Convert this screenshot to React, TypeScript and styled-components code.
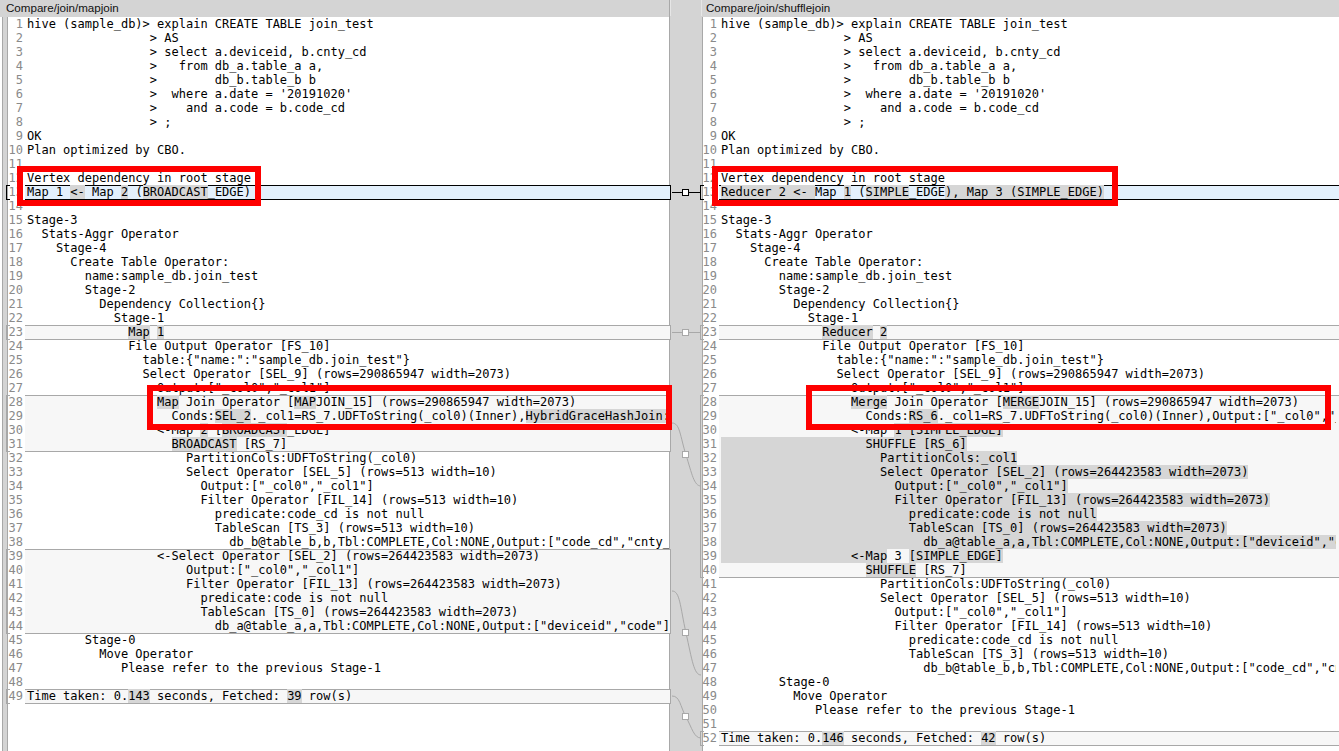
import React from 'react';
import styled, { createGlobalStyle } from 'styled-components';

// ‹ › wrap the parts the diff tool highlights inside a line
const sharedHead = [
  'hive (sample_db)> explain CREATE TABLE join_test',
  '                 > AS',
  '                 > select a.deviceid, b.cnty_cd',
  '                 >   from db_a.table_a a,',
  '                 >        db_b.table_b b',
  "                 >  where a.date = '20191020'",
  '                 >    and a.code = b.code_cd',
  '                 > ;',
  'OK',
  'Plan optimized by CBO.',
  '',
  'Vertex dependency in root stage',
];

const sharedStage = [
  '',
  'Stage-3',
  '  Stats-Aggr Operator',
  '    Stage-4',
  '      Create Table Operator:',
  '        name:sample_db.join_test',
  '        Stage-2',
  '          Dependency Collection{}',
  '            Stage-1',
];

const LEFT_LINES = [
  ...sharedHead,
  'Map 1 ‹<-› Map ‹2› (‹BROADCAST›_EDGE)',
  ...sharedStage,
  '              ‹Map› ‹1›',
  '              File Output Operator [FS_10]',
  '                table:{"name:":"sample_db.join_test"}',
  '                Select Operator [SEL_9] (rows=290865947 width=2073)',
  '                  Output:["_col0","_col1"]',
  '                  ‹Map› Join Operator [‹MAP›JOIN_15] (rows=290865947 width=2073)',
  '                    Conds:‹SEL_2›._col1=RS_7.UDFToString(_col0)(Inner),‹HybridGraceHashJoin:true›,Output:["_col0","_col1"]',
  '                  <-Map ‹2› [‹BROADCAST›_EDGE]',
  '                    ‹BROADCAST› [RS_7]',
  '                      PartitionCols:UDFToString(_col0)',
  '                      Select Operator [SEL_5] (rows=513 width=10)',
  '                        Output:["_col0","_col1"]',
  '                        Filter Operator [FIL_14] (rows=513 width=10)',
  '                          predicate:code_cd is not null',
  '                          TableScan [TS_3] (rows=513 width=10)',
  '                            db_b@table_b,b,Tbl:COMPLETE,Col:NONE,Output:["code_cd","cnty_cd"]',
  '                  <-Select Operator [SEL_2] (rows=264423583 width=2073)',
  '                      Output:["_col0","_col1"]',
  '                      Filter Operator [FIL_13] (rows=264423583 width=2073)',
  '                        predicate:code is not null',
  '                        TableScan [TS_0] (rows=264423583 width=2073)',
  '                          db_a@table_a,a,Tbl:COMPLETE,Col:NONE,Output:["deviceid","code"]',
  '        Stage-0',
  '          Move Operator',
  '             Please refer to the previous Stage-1',
  '',
  'Time taken: 0.‹143› seconds, Fetched: ‹39› row(s)',
];

const RIGHT_LINES = [
  ...sharedHead,
  '‹Reducer 2 <- ›Map ‹1› (‹SIMPLE›_EDGE‹), Map 3 (SIMPLE_EDGE)›',
  ...sharedStage,
  '              ‹Reducer› ‹2›',
  '              File Output Operator [FS_10]',
  '                table:{"name:":"sample_db.join_test"}',
  '                Select Operator [SEL_9] (rows=290865947 width=2073)',
  '                  Output:["_col0","_col1"]',
  '                  ‹Merge› Join Operator [‹MERGE›JOIN_15] (rows=290865947 width=2073)',
  '                    Conds:‹RS_6›._col1=RS_7.UDFToString(_col0)(Inner),Output:["_col0","_col1"]',
  '                  <-Map ‹1 [SIMPLE_EDGE]›',
  '‹                    SHUFFLE [RS_6]›',
  '‹                      PartitionCols:_col1›',
  '‹                      Select Operator [SEL_2] (rows=264423583 width=2073)›',
  '‹                        Output:["_col0","_col1"]›',
  '‹                        Filter Operator [FIL_13] (rows=264423583 width=2073)›',
  '‹                          predicate:code is not null›',
  '‹                          TableScan [TS_0] (rows=264423583 width=2073)›',
  '‹                            db_a@table_a,a,Tbl:COMPLETE,Col:NONE,Output:["deviceid","code"]›',
  '‹                  <-Map› 3 ‹[SIMPLE_EDGE]›',
  '                    ‹SHUFFLE› [RS_7]',
  '                      PartitionCols:UDFToString(_col0)',
  '                      Select Operator [SEL_5] (rows=513 width=10)',
  '                        Output:["_col0","_col1"]',
  '                        Filter Operator [FIL_14] (rows=513 width=10)',
  '                          predicate:code_cd is not null',
  '                          TableScan [TS_3] (rows=513 width=10)',
  '                            db_b@table_b,b,Tbl:COMPLETE,Col:NONE,Output:["code_cd","cnty_cd"]',
  '        Stage-0',
  '          Move Operator',
  '             Please refer to the previous Stage-1',
  '',
  'Time taken: 0.‹146› seconds, Fetched: ‹42› row(s)',
];

type Range = { from: number; to: number; active?: boolean };

const LEFT_RANGES: Range[] = [
  { from: 13, to: 13, active: true },
  { from: 23, to: 23 },
  { from: 28, to: 31 },
  { from: 39, to: 44 },
  { from: 49, to: 49 },
];

const RIGHT_RANGES: Range[] = [
  { from: 13, to: 13, active: true },
  { from: 23, to: 23 },
  { from: 28, to: 40 },
  { from: 52, to: 52 },
];

const CURVES = [
  { d: 'M2 407 C10 407 10 420 16 439 S24 470 31 470', x: 16, y: 439 },
  { d: 'M2 575 C10 575 10 590 16 617 S24 659 31 659', x: 16, y: 617 },
  { d: 'M2 680 C10 680 10 690 16 701 S24 722 31 722', x: 16, y: 701 },
];

function renderCode(text: string) {
  return text.split(/(‹[^›]*›)/).map((part, idx) =>
    part.startsWith('‹') ? <Mark key={idx}>{part.slice(1, -1)}</Mark> : part,
  );
}

function DiffLines({ lines, ranges, insertBefore }: { lines: string[]; ranges: Range[]; insertBefore?: number }) {
  const row = (num: number) => (
    <Row key={num}>
      <Num>{num}</Num>
      <Code>{renderCode(lines[num - 1])}</Code>
    </Row>
  );

  const out: React.ReactNode[] = [];
  let num = 1;
  while (num <= lines.length) {
    const current = num;
    if (current === insertBefore) out.push(<InsertMark key="insert" />);
    const range = ranges.find((r) => r.from === current);
    if (range) {
      const rows = [];
      for (let n = range.from; n <= range.to; n++) rows.push(row(n));
      out.push(
        <Block key={`b${num}`} $active={range.active}>
          {rows}
        </Block>,
      );
      num = range.to + 1;
    } else {
      out.push(row(num));
      num++;
    }
  }
  return <>{out}</>;
}

export default function App() {
  return (
    <Window>
      <GlobalStyle />
      <LeftPane>
        <Title>Compare/join/mapjoin</Title>
        <PaneBody>
          <Strip />
          <Lines>
            <DiffLines lines={LEFT_LINES} ranges={LEFT_RANGES} />
          </Lines>
        </PaneBody>
      </LeftPane>

      <Gutter>
        <GutterTitle />
        <svg width="32" height="735" viewBox="0 0 32 735" style={{ display: 'block', overflow: 'visible' }}>
          <path d="M2 176.5 H30" stroke="#000" fill="none" />
          <rect x="12.5" y="173.5" width="6" height="6" fill="#fff" stroke="#000" />
          <path d="M2 316.5 H30" stroke="#a8a8a8" fill="none" />
          <rect x="12.5" y="313.5" width="6" height="6" fill="#fff" stroke="#a8a8a8" />
          {CURVES.map((c) => (
            <g key={c.y}>
              <path d={c.d} stroke="#a8a8a8" fill="none" />
              <rect x={c.x - 3.5} y={c.y - 3.5} width="6" height="6" fill="#fff" stroke="#a8a8a8" />
            </g>
          ))}
        </svg>
      </Gutter>

      <RightPane>
        <RightTitle>Compare/join/shufflejoin</RightTitle>
        <RightLines>
          <DiffLines lines={RIGHT_LINES} ranges={RIGHT_RANGES} insertBefore={48} />
        </RightLines>
      </RightPane>

      <RedBox $x={17} $y={166} $w={244} $h={40} />
      <RedBox $x={147} $y={385} $w={525} $h={45} />
      <RedBox $x={712} $y={166} $w={406} $h={40} />
      <RedBox $x={806} $y={385} $w={525} $h={45} />
    </Window>
  );
}

const GlobalStyle = createGlobalStyle`
  html, body {
    margin: 0;
    padding: 0;
    background: #fff;
  }
`;

const Window = styled.div`
  position: relative;
  display: grid;
  grid-template-columns: 670px 32px 637px;
  width: 1339px;
  height: 751px;
  overflow: hidden;
  font-family: 'DejaVu Sans Mono', 'Liberation Mono', monospace;
  font-size: 12px;
  line-height: 14px;
  color: #000;
`;

const LeftPane = styled.div`
  display: flex;
  flex-direction: column;
  min-width: 0;
  border-right: 1px solid #a8a8a8;
`;

const RightPane = styled.div`
  display: flex;
  flex-direction: column;
  min-width: 0;
`;

const Title = styled.div`
  flex: 0 0 17px;
  height: 17px;
  padding-left: 6px;
  background: #d4d4d4;
  font-family: 'Liberation Sans', Arial, sans-serif;
  font-size: 11.6px;
  line-height: 16px;
  color: #111;
`;

const RightTitle = styled(Title)`
  padding-left: 4px;
`;

const PaneBody = styled.div`
  display: flex;
  flex: 1;
  min-height: 0;
`;

const Strip = styled.div`
  flex: 0 0 6px;
  margin-left: 2px;
  width: 6px;
  box-sizing: border-box;
  background: #d4d4d4;
  border-left: 1px solid #a8a8a8;
  border-right: 1px solid #a8a8a8;
`;

const Lines = styled.div`
  flex: 1;
  min-width: 0;
`;

const Row = styled.div`
  display: flex;
  height: 14px;
`;

const Num = styled.span`
  flex: 0 0 17px;
  box-sizing: border-box;
  padding-right: 2px;
  text-align: right;
  color: #8a8a8a;
`;

const Code = styled.span`
  flex: 1;
  min-width: 0;
  padding-left: 2px;
  overflow: hidden;
  white-space: pre;
`;

const RightLines = styled(Lines)`
  box-shadow: inset 1px 0 #a8a8a8;

  ${Code} {
    margin-right: 3px;
  }
`;

const Mark = styled.span`
  background: #d6d6d6;
`;

const Block = styled.div<{ $active?: boolean }>`
  position: relative;
  isolation: isolate;

  /* tint and rule of the changed lines */
  &::after {
    content: '';
    position: absolute;
    z-index: -1;
    top: 0;
    bottom: -1px;
    left: 17px;
    right: -2px;
    border: 1px solid ${(p) => (p.$active ? '#000' : '#a8a8a8')};
    border-left: 0;
    background: ${(p) => (p.$active ? '#e3f0fc' : '#f7f7f7')};
  }

  /* small bracket on the outer side of the line numbers */
  &::before {
    content: '';
    position: absolute;
    top: 0;
    bottom: -1px;
    left: -2px;
    width: 3px;
    border: 1px solid ${(p) => (p.$active ? '#000' : '#a8a8a8')};
    border-right: 0;
  }
`;

/* a rule between two lines: text that exists only on the other side */
const InsertMark = styled.div`
  height: 0;
  margin-left: 18px;
  box-shadow: 0 1px 0 #a8a8a8;
`;

const Gutter = styled.div`
  background: #d4d4d4;
`;

const GutterTitle = styled.div`
  height: 16px;
  border-left: 1px solid #e6e6e6;
  border-right: 1px solid #e6e6e6;
`;

const RedBox = styled.div<{ $x: number; $y: number; $w: number; $h: number }>`
  position: absolute;
  left: ${(p) => p.$x}px;
  top: ${(p) => p.$y}px;
  width: ${(p) => p.$w}px;
  height: ${(p) => p.$h}px;
  box-sizing: border-box;
  border: 6px solid #fe0000;
`;
